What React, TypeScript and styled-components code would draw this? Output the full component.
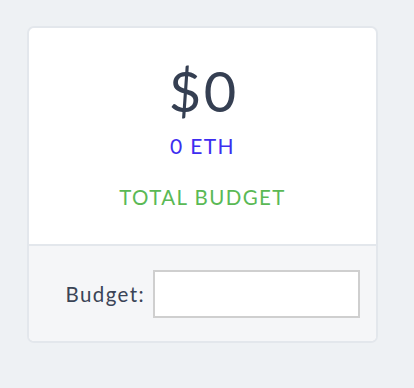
import React from "react";
import styled, { createGlobalStyle } from "styled-components";

const Global = createGlobalStyle`
  html, body { margin: 0; padding: 0; background: #eef1f4; }
  body { font-family: Lato, "Open Sans", sans-serif; }
`;

const Page = styled.div`
  padding: 26px 0 0 27px;
  min-height: 388px;
  box-sizing: border-box;
`;

const Card = styled.div`
  width: 351px;
  box-sizing: border-box;
  border: 2px solid #e3e7ec;
  border-radius: 7px;
  background: #fff;
  overflow: hidden;
`;

const Summary = styled.div`
  display: flex;
  flex-direction: column;
  align-items: center;
  height: 216px;
  box-sizing: border-box;
  padding-top: 31px;
`;

const Amount = styled.div`
  font-size: 56px;
  line-height: 64px;
  color: #353f52;
  letter-spacing: 2.5px;
  text-indent: 2.5px;
`;

const Eth = styled.div`
  margin-top: 10px;
  font-size: 21px;
  line-height: 26px;
  color: #3d2df0;
  letter-spacing: 1.4px;
`;

const Caption = styled.div`
  margin-top: 25px;
  font-size: 20.5px;
  line-height: 26px;
  color: #5ab955;
  letter-spacing: 1.4px;
`;

const Footer = styled.div`
  display: flex;
  align-items: center;
  justify-content: flex-end;
  gap: 8px;
  height: 97px;
  box-sizing: border-box;
  border-top: 2px solid #e3e7ec;
  background: #f5f6f8;
  padding: 0 16px 0 0;
`;

const Label = styled.label`
  font-size: 20.5px;
  color: #3a4456;
  letter-spacing: 1.4px;
`;

const Input = styled.input`
  width: 207px;
  height: 48px;
  box-sizing: border-box;
  border: 2px solid #cfcfcf;
  background: #fff;
  outline: none;
  font-size: 18px;
  padding: 0 8px;
`;

export default function App() {
  return (
    <>
      <Global />
      <Page>
        <Card>
          <Summary>
            <Amount>$0</Amount>
            <Eth>0 ETH</Eth>
            <Caption>TOTAL BUDGET</Caption>
          </Summary>
          <Footer>
            <Label htmlFor="budget">Budget:</Label>
            <Input id="budget" type="text" />
          </Footer>
        </Card>
      </Page>
    </>
  );
}
